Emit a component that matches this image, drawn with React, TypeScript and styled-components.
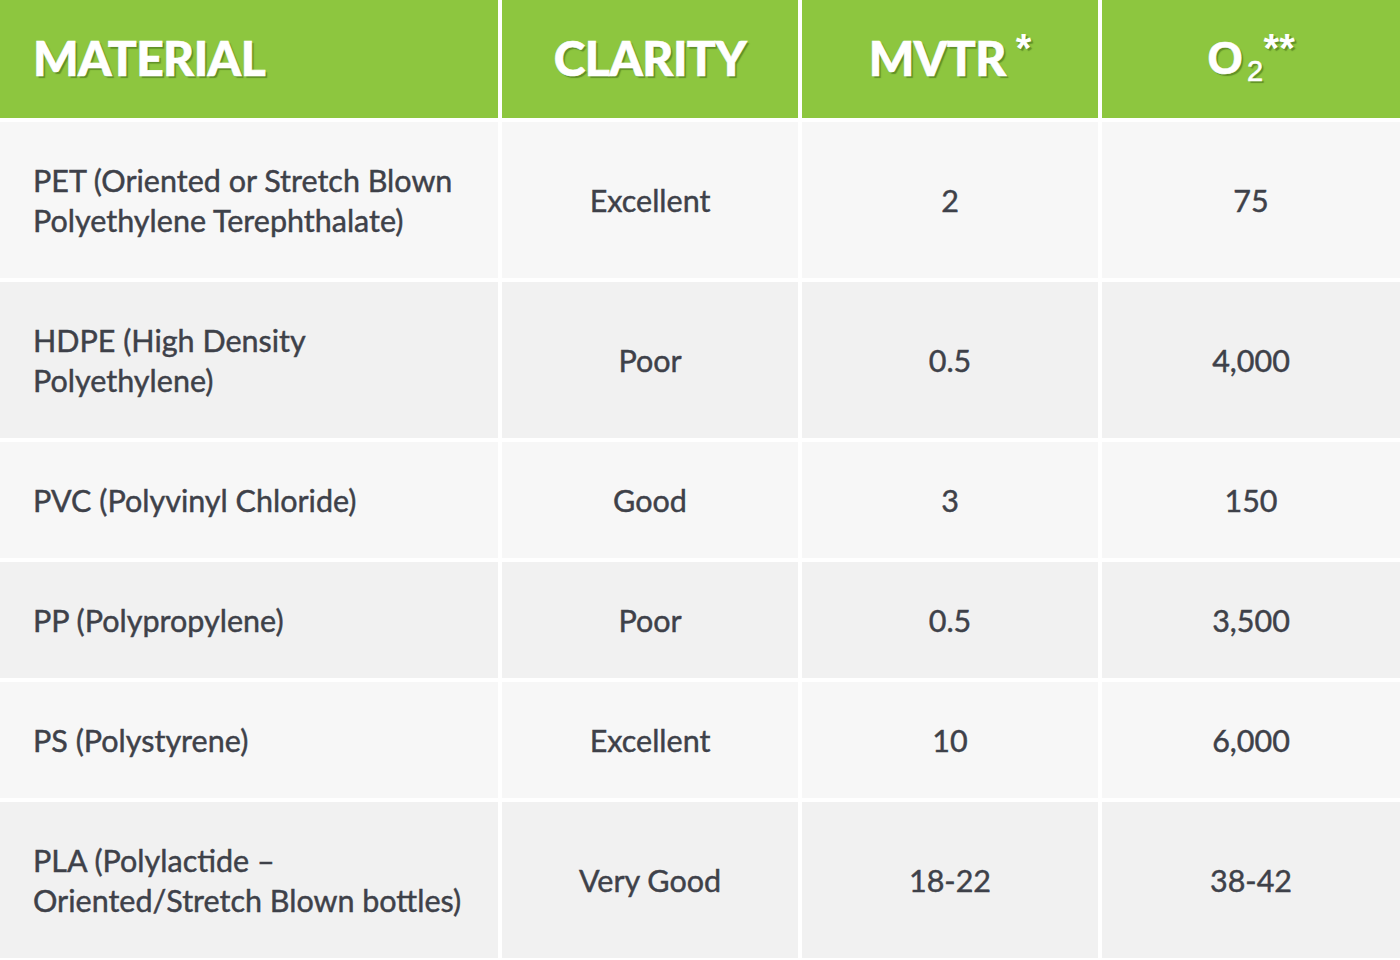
import React from 'react';
import styled, { createGlobalStyle } from 'styled-components';

const GlobalStyle = createGlobalStyle`
  html, body {
    margin: 0;
    padding: 0;
    background: #ffffff;
  }
  body {
    font-family: Lato, "Open Sans", "Liberation Sans", sans-serif;
  }
`;

const Table = styled.div`
  display: grid;
  grid-template-columns: 498px 296px 296px 298px;
  gap: 4px;
  width: 1400px;
`;

const HeadCell = styled.div<{ $center?: boolean }>`
  height: 118px;
  background: #8dc63f;
  display: flex;
  align-items: center;
  justify-content: ${(p) => (p.$center ? 'center' : 'flex-start')};
  padding: 0 0 2px ${(p) => (p.$center ? '0' : '33px')};
  box-sizing: border-box;
  color: #ffffff;
  font-family: Lato, "Liberation Sans", sans-serif;
  font-weight: 900;
  font-size: 48px;
  line-height: 1;
  letter-spacing: -0.6px;
  text-shadow: 2px 2px 1px rgba(60, 100, 20, 0.55);
  -webkit-text-stroke: 0.6px #ffffff;
`;

const Formula = styled.span`
  font-family: "Liberation Sans", Arial, sans-serif;
  font-weight: 700;
  font-size: 46px;
  letter-spacing: 0;
`;

const Sup = styled.span<{ $gap?: number }>`
  font-family: "Liberation Sans", Arial, sans-serif;
  font-weight: 700;
  font-size: 40px;
  letter-spacing: 0;
  position: relative;
  top: -10px;
  margin-left: ${(p) => p.$gap ?? 0}px;
  -webkit-text-stroke: 0;
`;

const Sub = styled.span`
  font-family: "Liberation Sans", Arial, sans-serif;
  font-weight: 400;
  font-size: 29px;
  position: relative;
  top: 13px;
  margin-left: 4px;
  margin-right: 1px;
`;

const Cell = styled.div<{ $even: boolean; $center?: boolean }>`
  background: ${(p) => (p.$even ? '#f1f1f1' : '#f7f7f7')};
  padding: 38px ${(p) => (p.$center ? '0' : '33px')};
  display: flex;
  align-items: center;
  justify-content: ${(p) => (p.$center ? 'center' : 'flex-start')};
  text-align: ${(p) => (p.$center ? 'center' : 'left')};
  color: #3e4149;
  font-family: Lato, "Liberation Sans", sans-serif;
  font-size: 30.5px;
  line-height: 40px;
  -webkit-text-stroke: 0.45px #3e4149;
`;

const rows: [string[], string, string, string][] = [
  [['PET (Oriented or Stretch Blown', 'Polyethylene Terephthalate)'], 'Excellent', '2', '75'],
  [['HDPE (High Density', 'Polyethylene)'], 'Poor', '0.5', '4,000'],
  [['PVC (Polyvinyl Chloride)'], 'Good', '3', '150'],
  [['PP (Polypropylene)'], 'Poor', '0.5', '3,500'],
  [['PS (Polystyrene)'], 'Excellent', '10', '6,000'],
  [['PLA (Polylactide \u2013', 'Oriented/Stretch Blown bottles)'], 'Very Good', '18-22', '38-42'],
];

export default function App() {
  return (
    <>
      <GlobalStyle />
      <Table>
        <HeadCell>MATERIAL</HeadCell>
        <HeadCell $center>CLARITY</HeadCell>
        <HeadCell $center>
          MVTR<Sup $gap={10}>*</Sup>
        </HeadCell>
        <HeadCell $center>
          <Formula>O</Formula>
          <Sub>2</Sub>
          <Sup>**</Sup>
        </HeadCell>
        {rows.map(([material, clarity, mvtr, o2], i) => {
          const even = i % 2 === 1;
          return (
            <React.Fragment key={i}>
              <Cell $even={even}>
                <div>
                  {material.map((line, j) => (
                    <div key={j}>{line}</div>
                  ))}
                </div>
              </Cell>
              <Cell $even={even} $center>
                {clarity}
              </Cell>
              <Cell $even={even} $center>
                {mvtr}
              </Cell>
              <Cell $even={even} $center>
                {o2}
              </Cell>
            </React.Fragment>
          );
        })}
      </Table>
    </>
  );
}
